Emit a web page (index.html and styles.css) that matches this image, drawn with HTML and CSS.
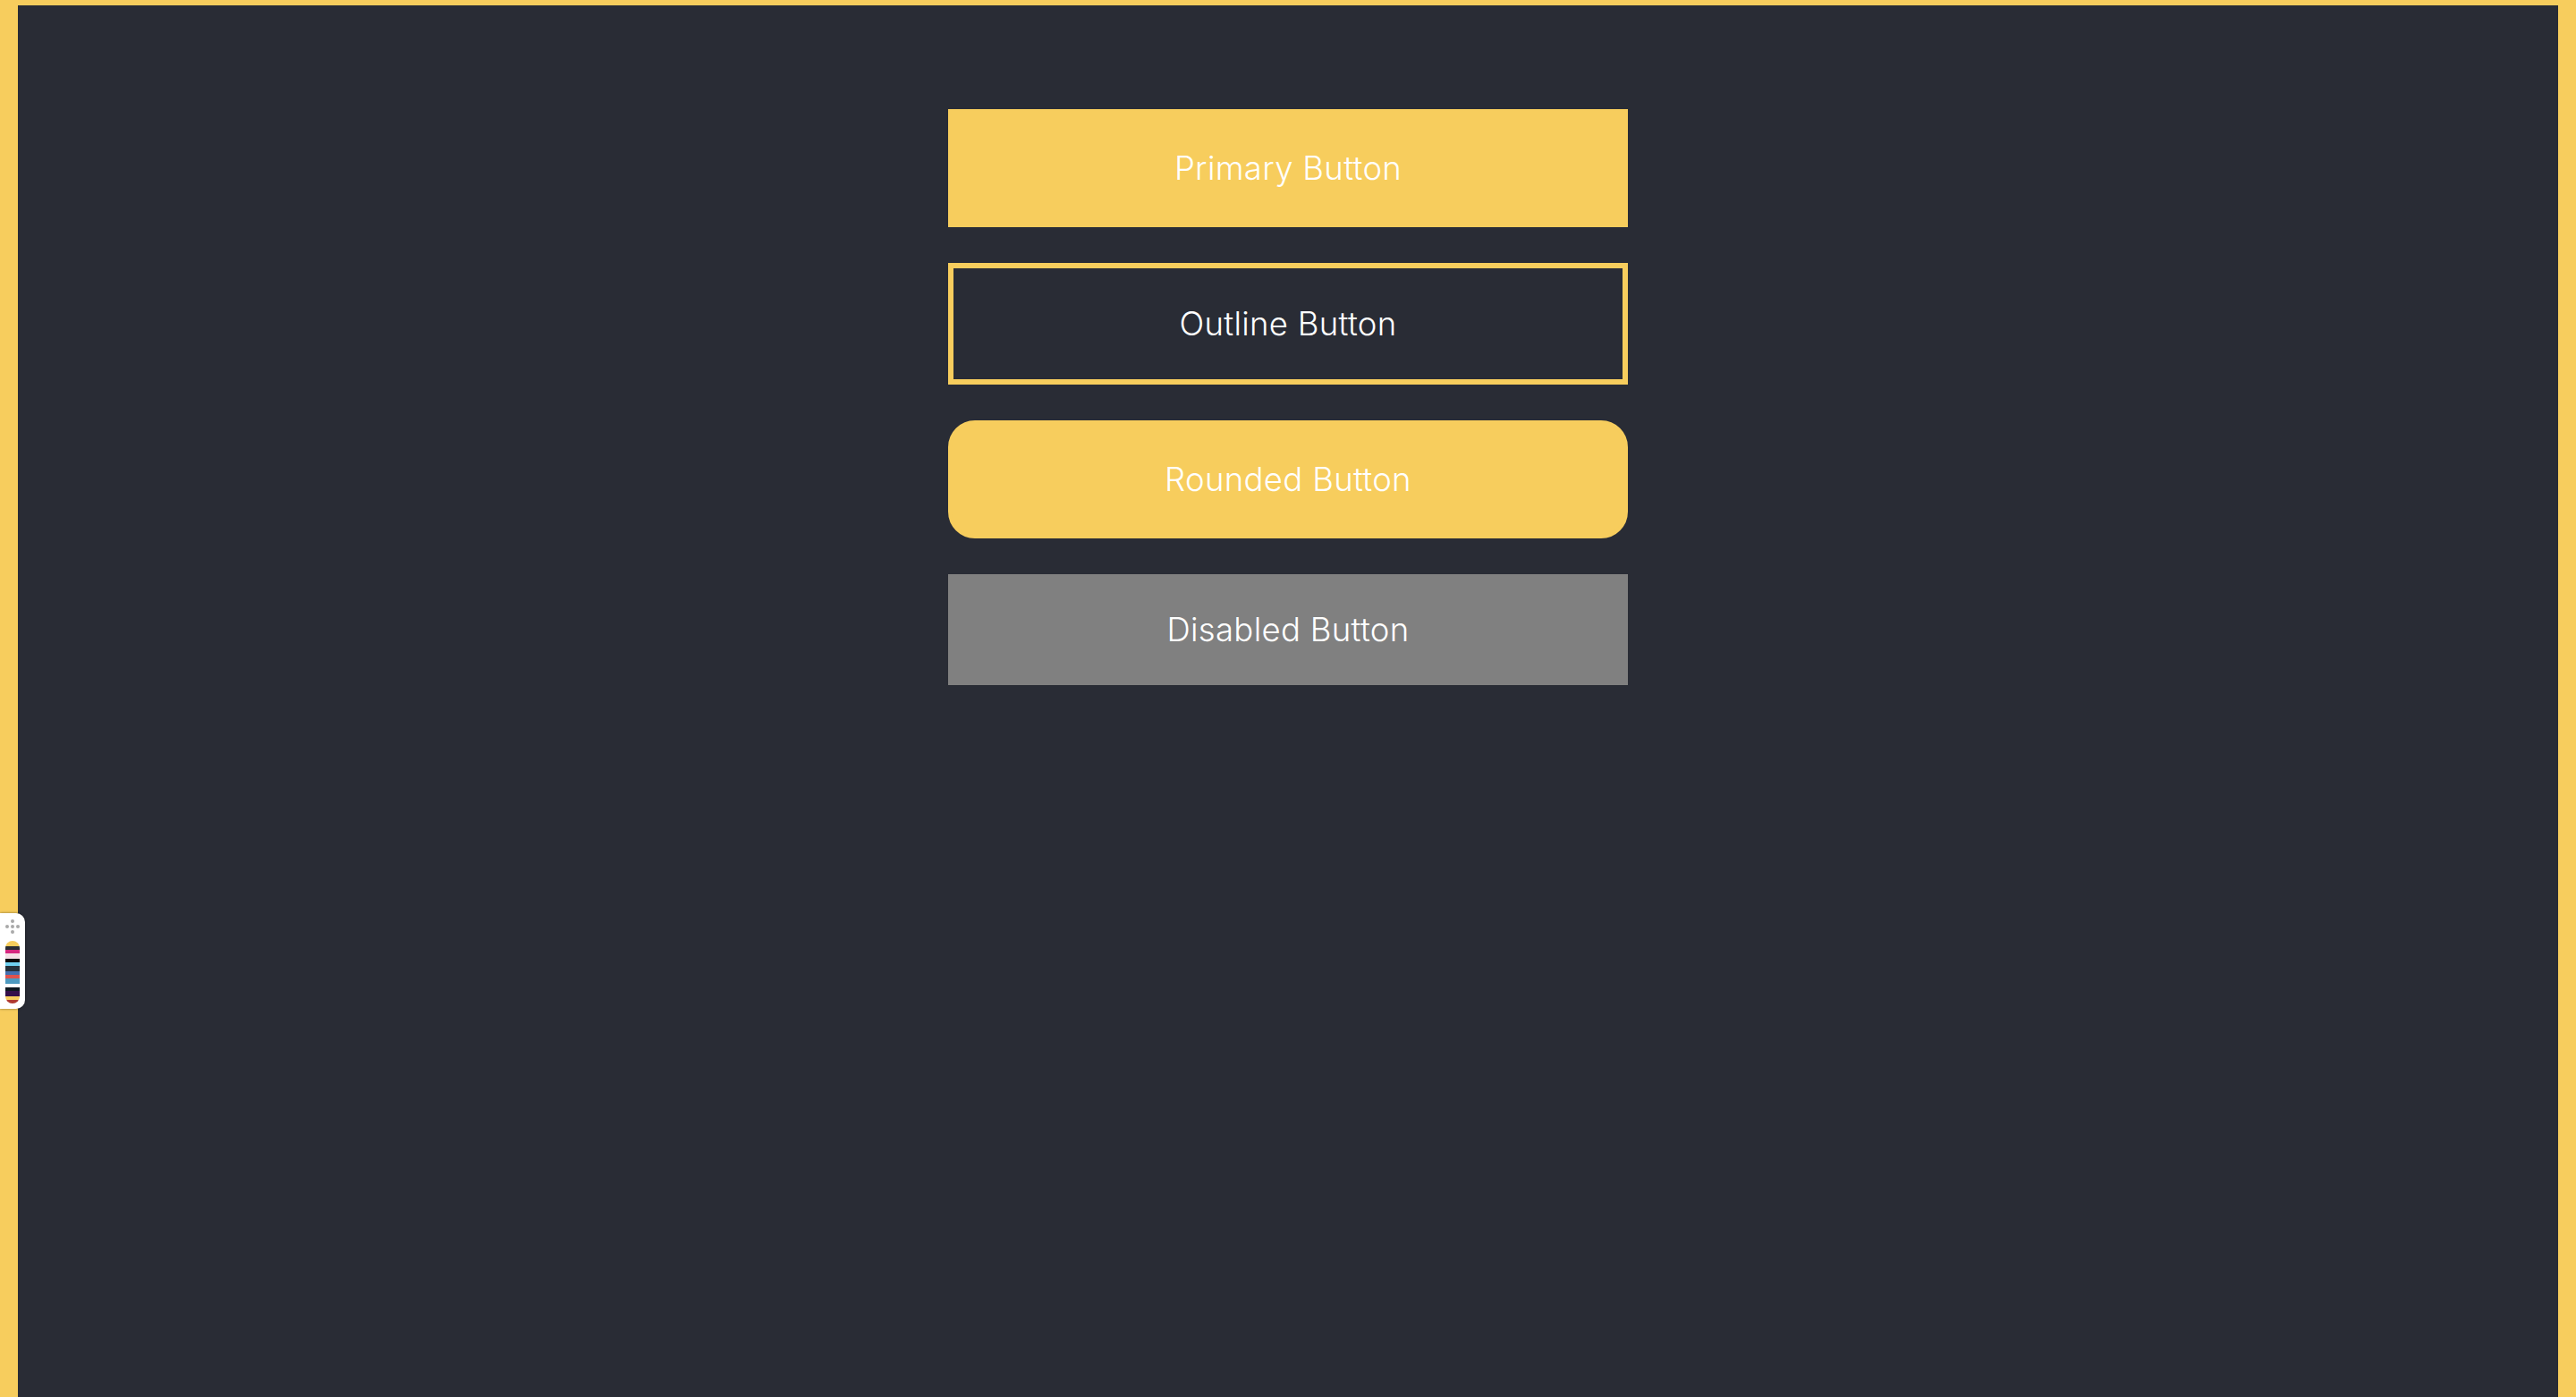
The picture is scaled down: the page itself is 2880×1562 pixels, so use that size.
FILE: index.html
```html
<!DOCTYPE html>
<html lang="en">
<head>
    <meta charset="UTF-8">
    <title>Buttons</title>
    <link rel="stylesheet" href="styles.css">
</head>
<body>
    <main class="buttons">
        <button class="btn btn-primary">Primary Button</button>
        <button class="btn btn-outline">Outline Button</button>
        <button class="btn btn-rounded">Rounded Button</button>
        <button class="btn btn-disabled" disabled>Disabled Button</button>
    </main>

    <aside class="palette-handle">
        <svg class="grip" width="16" height="16" viewBox="0 0 16 16">
            <circle cx="8" cy="2" r="2"/>
            <circle cx="2" cy="8" r="2"/>
            <circle cx="8" cy="8" r="2"/>
            <circle cx="14" cy="8" r="2"/>
            <circle cx="8" cy="14" r="2"/>
        </svg>
        <div class="stripes">
            <span class="s1"></span>
            <span class="s2"></span>
            <span class="s3"></span>
            <span class="s4"></span>
            <span class="s5"></span>
            <span class="s6"></span>
            <span class="s7"></span>
            <span class="s8"></span>
            <span class="s9"></span>
            <span class="s10"></span>
            <span class="s11"></span>
            <span class="s12"></span>
            <span class="s13"></span>
            <span class="s14"></span>
            <span class="s15"></span>
        </div>
    </aside>
</body>
</html>
```

FILE: styles.css
```css
* {
    margin: 0;
    padding: 0;
    box-sizing: border-box;
}

html, body {
    height: 100%;
}

body {
    font-family: "Inter", "Liberation Sans", sans-serif;
    background-color: #292c35;
    border: solid #f7cd5d;
    border-width: 6px 20px 0;
    overflow: hidden;
}

.buttons {
    display: flex;
    flex-direction: column;
    gap: 40px;
    width: 760px;
    margin: 0 auto;
    padding-top: 116px;
}

.btn {
    font-family: inherit;
    font-size: 36.5px;
    font-weight: 300;
    line-height: 44px;
    letter-spacing: 0.3px;
    color: #fff;
    padding: 40px;
    border: 4px solid #f7cd5d;
    background-color: #f7cd5d;
}

.btn-outline {
    background-color: transparent;
    border-width: 6px;
}

.btn-rounded {
    border-radius: 30px;
}

.btn-disabled {
    background-color: #808080;
    border: none;
}

/* floating palette widget on the left edge */
.palette-handle {
    position: fixed;
    left: 0;
    top: 1021px;
    width: 28px;
    height: 107px;
    padding-top: 7px;
    background-color: #fff;
    border-radius: 0 10px 10px 0;
    box-shadow: 0 0 3px rgba(0, 0, 0, 0.5);
    display: flex;
    flex-direction: column;
    align-items: center;
}

.grip {
    fill: #a9a9a9;
}

.stripes {
    width: 16px;
    margin-top: 8px;
    border-radius: 8px;
    overflow: hidden;
    display: flex;
    flex-direction: column;
}

.stripes span {
    display: block;
    height: 4px;
}

.stripes .s1 { height: 6px; background-color: #f7cd5d; }
.stripes .s2 { background-color: #2a2d35; }
.stripes .s3 { background-color: #d6267f; }
.stripes .s4 { height: 6px; background-color: #f5dfe6; }
.stripes .s5 { background-color: #0a0a0a; }
.stripes .s6 { background-color: #6fd0f0; }
.stripes .s7 { height: 6px; background-color: #25323c; }
.stripes .s8 { background-color: #4470b0; }
.stripes .s9 { background-color: #e0524d; }
.stripes .s10 { height: 6px; background-color: #4e9ac0; }
.stripes .s11 { background-color: #fff; }
.stripes .s12 { background-color: #0f1820; }
.stripes .s13 { height: 6px; background-color: #35104a; }
.stripes .s14 { background-color: #f7cd5d; }
.stripes .s15 { background-color: #b03a30; }
```
